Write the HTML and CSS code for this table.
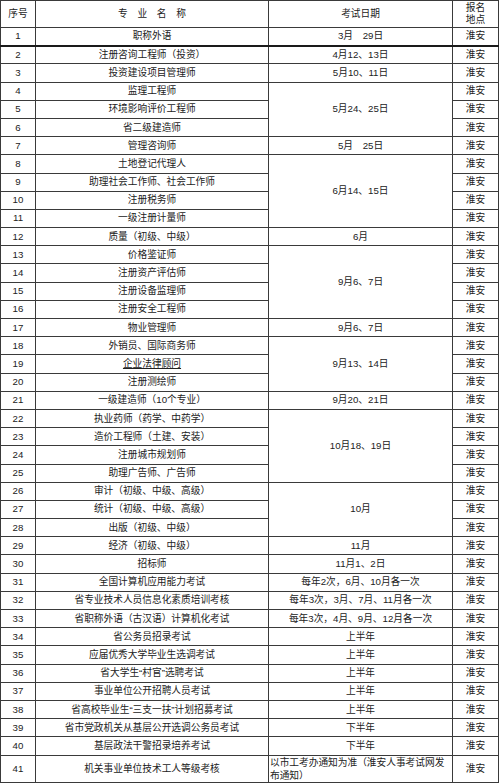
FILE: index.html
```html
<!DOCTYPE html>
<html lang="zh-CN">
<head>
<meta charset="utf-8">
<title>考试安排</title>
<link rel="stylesheet" href="styles.css">
</head>
<body>
<table class="sheet">
  <colgroup>
    <col class="c-no"><col class="c-name"><col class="c-date"><col class="c-place">
  </colgroup>
  <thead>
    <tr class="head">
      <th>序号</th>
      <th>专　业　名　称</th>
      <th>考试日期</th>
      <th>报名<br>地点</th>
    </tr>
  </thead>
  <tbody>
    <tr class="thick"><td>1</td><td>职称外语</td><td>3月　29日</td><td>淮安</td></tr>
    <tr><td>2</td><td>注册咨询工程师（投资）</td><td>4月12、13日</td><td>淮安</td></tr>
    <tr><td>3</td><td>投资建设项目管理师</td><td>5月10、11日</td><td>淮安</td></tr>
    <tr><td>4</td><td>监理工程师</td><td rowspan="3">5月24、25日</td><td>淮安</td></tr>
    <tr><td>5</td><td>环境影响评价工程师</td><td>淮安</td></tr>
    <tr><td>6</td><td>省二级建造师</td><td>淮安</td></tr>
    <tr><td>7</td><td>管理咨询师</td><td>5月　25日</td><td>淮安</td></tr>
    <tr><td>8</td><td>土地登记代理人</td><td rowspan="4">6月14、15日</td><td>淮安</td></tr>
    <tr><td>9</td><td>助理社会工作师、社会工作师</td><td>淮安</td></tr>
    <tr><td>10</td><td>注册税务师</td><td>淮安</td></tr>
    <tr><td>11</td><td>一级注册计量师</td><td>淮安</td></tr>
    <tr><td>12</td><td>质量（初级、中级）</td><td>6月</td><td>淮安</td></tr>
    <tr><td>13</td><td>价格鉴证师</td><td rowspan="4">9月6、7日</td><td>淮安</td></tr>
    <tr><td>14</td><td>注册资产评估师</td><td>淮安</td></tr>
    <tr><td>15</td><td>注册设备监理师</td><td>淮安</td></tr>
    <tr><td>16</td><td>注册安全工程师</td><td>淮安</td></tr>
    <tr><td>17</td><td>物业管理师</td><td>9月6、7日</td><td>淮安</td></tr>
    <tr><td>18</td><td>外销员、国际商务师</td><td rowspan="3">9月13、14日</td><td>淮安</td></tr>
    <tr><td>19</td><td><span class="link">企业法律顾问</span></td><td>淮安</td></tr>
    <tr><td>20</td><td>注册测绘师</td><td>淮安</td></tr>
    <tr><td>21</td><td>一级建造师（10个专业）</td><td>9月20、21日</td><td>淮安</td></tr>
    <tr><td>22</td><td>执业药师（药学、中药学）</td><td rowspan="4">10月18、19日</td><td>淮安</td></tr>
    <tr><td>23</td><td>造价工程师（土建、安装）</td><td>淮安</td></tr>
    <tr><td>24</td><td>注册城市规划师</td><td>淮安</td></tr>
    <tr><td>25</td><td>助理广告师、广告师</td><td>淮安</td></tr>
    <tr><td>26</td><td>审计（初级、中级、高级）</td><td rowspan="3">10月</td><td>淮安</td></tr>
    <tr><td>27</td><td>统计（初级、中级、高级）</td><td>淮安</td></tr>
    <tr><td>28</td><td>出版（初级、中级）</td><td>淮安</td></tr>
    <tr><td>29</td><td>经济（初级、中级）</td><td>11月</td><td>淮安</td></tr>
    <tr><td>30</td><td>招标师</td><td>11月1、2日</td><td>淮安</td></tr>
    <tr><td>31</td><td>全国计算机应用能力考试</td><td>每年2次，6月、10月各一次</td><td>淮安</td></tr>
    <tr><td>32</td><td>省专业技术人员信息化素质培训考核</td><td>每年3次，3月、7月、11月各一次</td><td>淮安</td></tr>
    <tr><td>33</td><td>省职称外语（古汉语）计算机化考试</td><td>每年3次，4月、9月、12月各一次</td><td>淮安</td></tr>
    <tr><td>34</td><td>省公务员招录考试</td><td>上半年</td><td>淮安</td></tr>
    <tr><td>35</td><td>应届优秀大学毕业生选调考试</td><td>上半年</td><td>淮安</td></tr>
    <tr><td>36</td><td>省大学生“村官”选聘考试</td><td>上半年</td><td>淮安</td></tr>
    <tr><td>37</td><td>事业单位公开招聘人员考试</td><td>上半年</td><td>淮安</td></tr>
    <tr><td>38</td><td>省高校毕业生“三支一扶”计划招募考试</td><td>上半年</td><td>淮安</td></tr>
    <tr><td>39</td><td>省市党政机关从基层公开选调公务员考试</td><td>下半年</td><td>淮安</td></tr>
    <tr><td>40</td><td>基层政法干警招录培养考试</td><td>下半年</td><td>淮安</td></tr>
    <tr class="tall"><td>41</td><td>机关事业单位技术工人等级考核</td><td class="wrap">以市工考办通知为准（淮安人事考试网发布通知）</td><td>淮安</td></tr>
  </tbody>
</table>
</body>
</html>
```

FILE: styles.css
```css
html, body {
  margin: 0;
  padding: 0;
  background: #ffffff;
}

.sheet {
  border-collapse: collapse;
  table-layout: fixed;
  width: 499px;
  font-family: "Liberation Sans", "Noto Sans CJK SC", sans-serif;
  font-size: 9.7px;
  color: #222222;
}

.c-no { width: 35px; }
.c-name { width: 233px; }
.c-date { width: 184px; }
.c-place { width: 46px; }

.sheet th,
.sheet td {
  border: 1px solid #3a3a3a;
  padding: 0 2px;
  text-align: center;
  vertical-align: middle;
  font-weight: normal;
  line-height: 12px;
  white-space: nowrap;
  overflow: hidden;
}

.sheet tr {
  height: 18.2px;
}

.sheet tr.head {
  height: 27px;
}

.sheet tr.thick td {
  border-bottom: 2px solid #1a1a1a;
}

.sheet tr.tall {
  height: 27px;
}

.sheet td.wrap {
  white-space: normal;
  text-align: left;
  line-height: 13px;
  padding: 0 1px;
}

.link {
  text-decoration: underline;
}
```
